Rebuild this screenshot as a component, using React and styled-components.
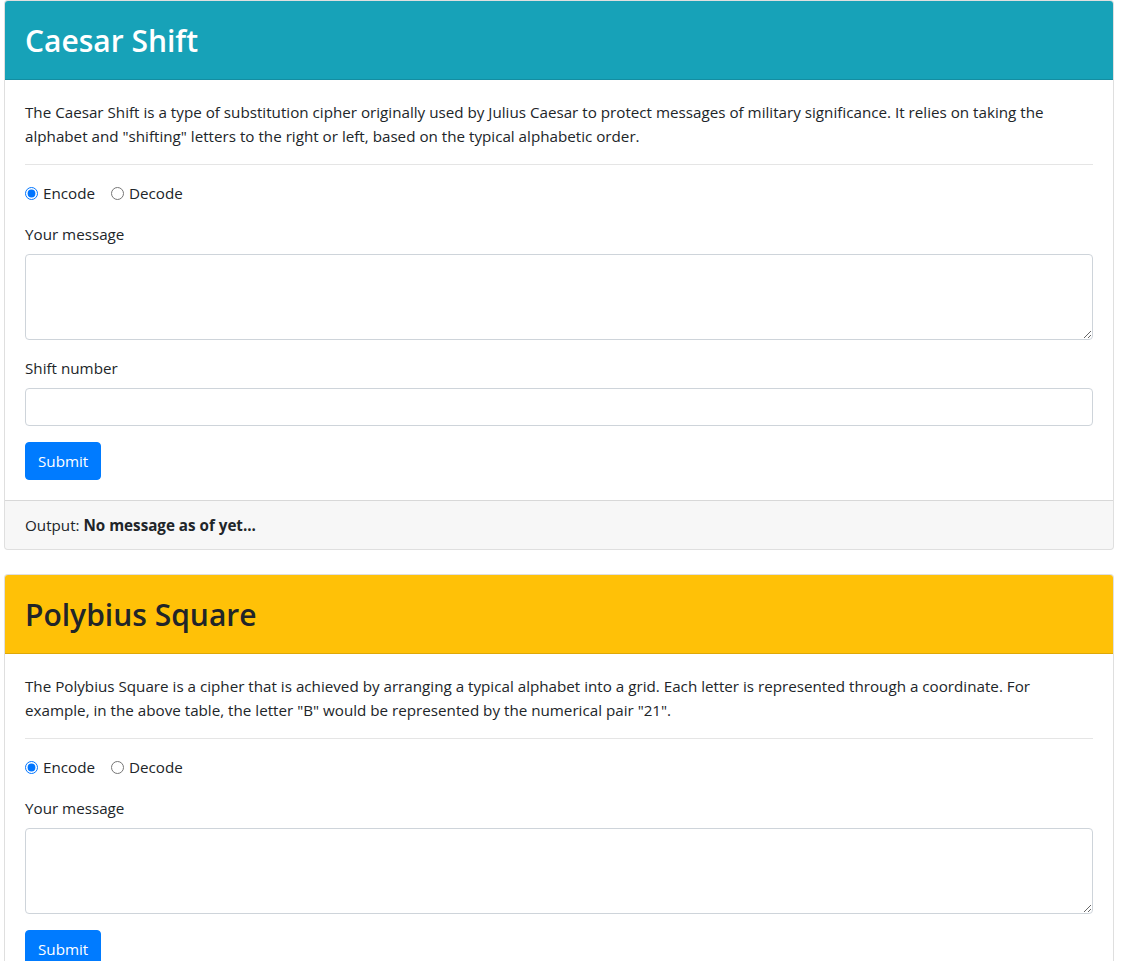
import styled, { createGlobalStyle } from 'styled-components'

const Global = createGlobalStyle`
  html, body {
    margin: 0;
    padding: 0;
    background: #fff;
  }
  body {
    font-family: "Open Sans", "Noto Sans", sans-serif;
    font-size: 15.2px;
    line-height: 24px;
    color: #212529;
  }
  * { box-sizing: border-box; }
`

const ciphers = [
  {
    id: 'caesar',
    title: 'Caesar Shift',
    tone: 'info',
    desc: 'The Caesar Shift is a type of substitution cipher originally used by Julius Caesar to protect messages of military significance. It relies on taking the alphabet and "shifting" letters to the right or left, based on the typical alphabetic order.',
    shift: true,
  },
  {
    id: 'polybius',
    title: 'Polybius Square',
    tone: 'warning',
    desc: 'The Polybius Square is a cipher that is achieved by arranging a typical alphabet into a grid. Each letter is represented through a coordinate. For example, in the above table, the letter "B" would be represented by the numerical pair "21".',
    shift: false,
  },
]

const CipherCard = ({ id, title, tone, desc, shift }) => {
  return (
    <Card>
      <Header tone={tone}>
        <h2>{title}</h2>
      </Header>
      <Body>
        <Desc>{desc}</Desc>
        <Rule />
        <RadioRow>
          <RadioLabel>
            <input type="radio" name={id + '-mode'} defaultChecked />
            Encode
          </RadioLabel>
          <RadioLabel>
            <input type="radio" name={id + '-mode'} />
            Decode
          </RadioLabel>
        </RadioRow>
        <Group>
          <Label>Your message</Label>
          <TextArea rows={3} />
        </Group>
        {shift && (
          <Group>
            <Label>Shift number</Label>
            <Input type="text" />
          </Group>
        )}
        <Btn>Submit</Btn>
      </Body>
      <Footer>
        Output: <b>No message as of yet...</b>
      </Footer>
    </Card>
  )
}

const App = () => {
  return (
    <Page>
      <Global />
      {ciphers.map((c) => (
        <CipherCard key={c.id} {...c} />
      ))}
    </Page>
  )
}
export default App

const Page = styled.div`
  width: 1110px;
  margin-left: 4px;
  display: flex;
  flex-direction: column;
  gap: 24px;
`
const Card = styled.div`
  display: flex;
  flex-direction: column;
  border: 1px solid rgba(0, 0, 0, 0.125);
  border-radius: 4px;
  background: #fff;
  overflow: hidden;
`
const Header = styled.div`
  padding: 21px 20px 19px;
  background-color: ${({ tone }) => (tone === 'info' ? '#17a2b8' : '#ffc107')};
  color: ${({ tone }) => (tone === 'info' ? '#fff' : '#212529')};
  border-bottom: 1px solid rgba(0, 0, 0, 0.125);

  h2 {
    margin: 0;
    font-size: 30px;
    font-weight: 600;
    line-height: 38px;
  }
`
const Body = styled.div`
  padding: 20px;
`
const Desc = styled.p`
  margin: 0 0 16px;
`
const Rule = styled.hr`
  margin: 0 0 16px;
  border: 0;
  border-top: 1px solid rgba(0, 0, 0, 0.1);
`
const RadioRow = styled.div`
  display: flex;
  gap: 16px;
  height: 24px;
  margin-bottom: 17px;
`
const RadioLabel = styled.label`
  display: flex;
  align-items: center;
  height: 24px;

  input {
    margin: 0 5px 0 0;
    width: 13px;
    height: 13px;
  }
`
const Group = styled.div`
  margin-bottom: 16px;
`
const Label = styled.label`
  display: block;
  margin-bottom: 8px;
`
const TextArea = styled.textarea`
  display: block;
  width: 100%;
  height: 86px;
  padding: 6px 12px;
  font: inherit;
  color: #495057;
  border: 1px solid #ced4da;
  border-radius: 4px;
`
const Input = styled.input`
  display: block;
  width: 100%;
  height: 38px;
  padding: 6px 12px;
  font: inherit;
  color: #495057;
  border: 1px solid #ced4da;
  border-radius: 4px;
`
const Btn = styled.button`
  height: 38px;
  padding: 6px 12px;
  font: inherit;
  color: #fff;
  background-color: #007bff;
  border: 1px solid #007bff;
  border-radius: 4px;
`
const Footer = styled.div`
  padding: 12px 20px;
  background-color: rgba(0, 0, 0, 0.03);
  border-top: 1px solid rgba(0, 0, 0, 0.125);
`
